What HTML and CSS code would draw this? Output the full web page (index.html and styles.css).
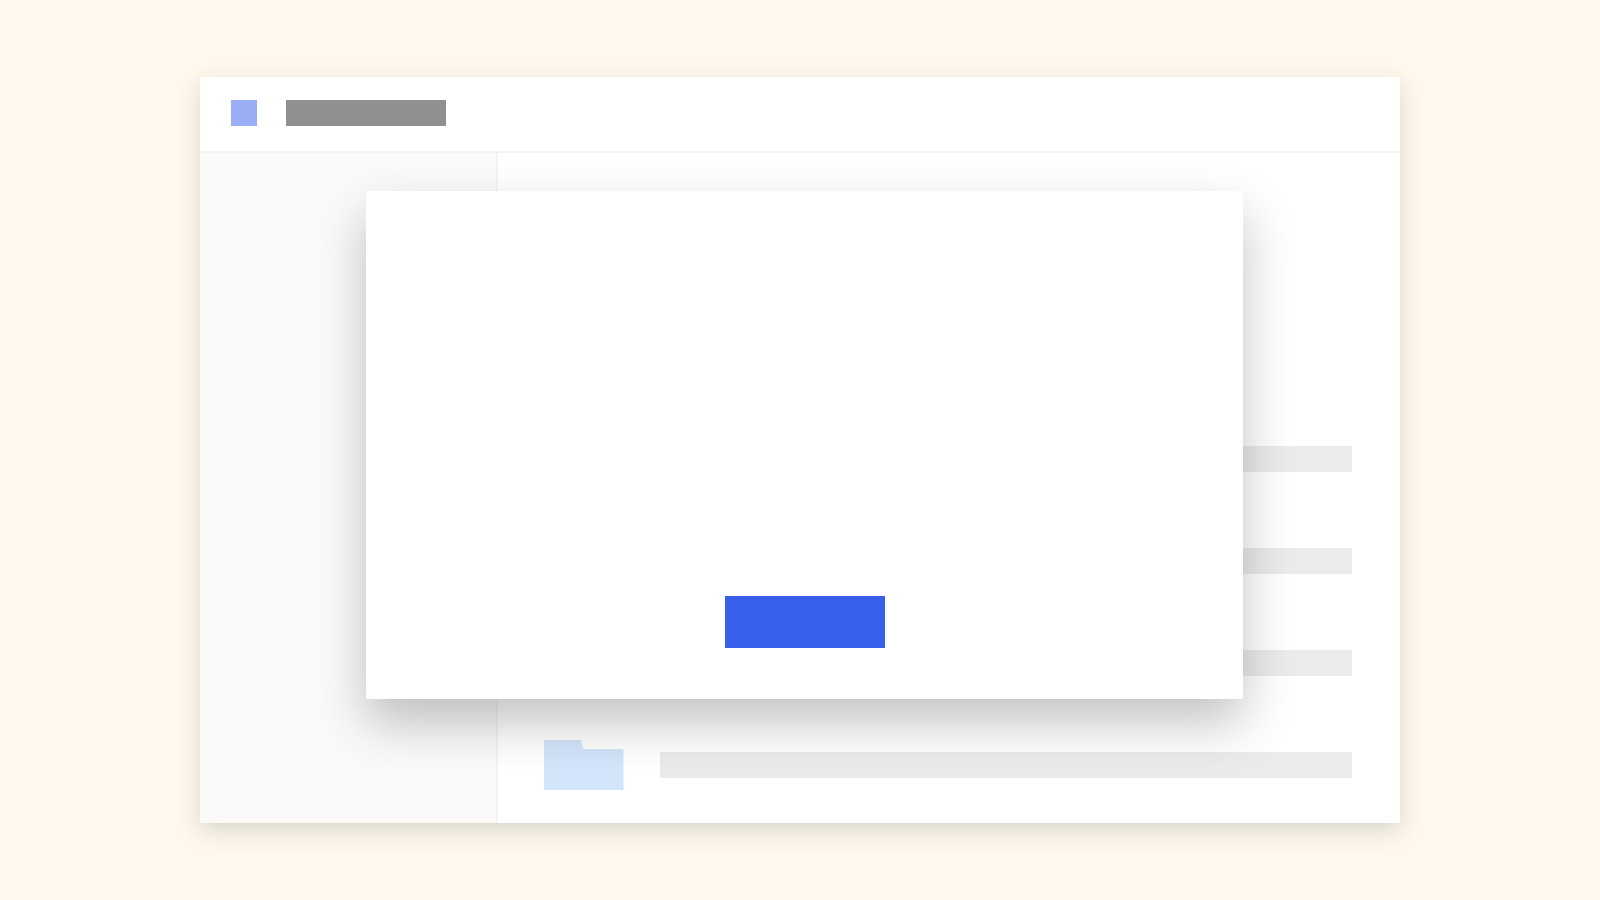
FILE: index.html
```html
<!DOCTYPE html>
<html lang="en">
<head>
<meta charset="utf-8">
<meta name="viewport" content="width=device-width, initial-scale=1">
<title>Dialog over file list</title>
<link rel="stylesheet" href="styles.css">
</head>
<body>
<div class="window">
  <header class="header">
    <span class="logo"></span>
    <span class="title"></span>
  </header>
  <div class="body">
    <aside class="sidebar"></aside>
    <main class="main">
      <ul class="files">
        <li class="file">
          <svg class="folder" viewBox="0 0 80 50" aria-hidden="true"><path d="M0 0H37C38 3 38 7 40 9H79.500V50H0Z"/></svg>
          <span class="line"></span>
        </li>
        <li class="file">
          <svg class="folder" viewBox="0 0 80 50" aria-hidden="true"><path d="M0 0H37C38 3 38 7 40 9H79.500V50H0Z"/></svg>
          <span class="line"></span>
        </li>
        <li class="file">
          <svg class="folder" viewBox="0 0 80 50" aria-hidden="true"><path d="M0 0H37C38 3 38 7 40 9H79.500V50H0Z"/></svg>
          <span class="line"></span>
        </li>
        <li class="file">
          <svg class="folder" viewBox="0 0 80 50" aria-hidden="true"><path d="M0 0H37C38 3 38 7 40 9H79.500V50H0Z"/></svg>
          <span class="line"></span>
        </li>
      </ul>
    </main>
  </div>
  <section class="dialog" role="dialog" aria-label="Dialog">
    <button class="action" type="button" aria-label="Confirm"></button>
  </section>
</div>
</body>
</html>
```
FILE: styles.css
```css
* {
  box-sizing: border-box;
}

body {
  margin: 0;
  min-height: 100vh;
  display: flex;
  justify-content: center;
  padding: 77px 0;
  background: #fff9ed;
  font-family: "Liberation Sans", Arial, sans-serif;
}

.window {
  position: relative;
  display: flex;
  flex-direction: column;
  width: 75%;
  background: #fff;
  box-shadow: 0 8px 22px rgba(10, 40, 10, 0.16);
}

.header {
  display: flex;
  align-items: center;
  gap: 29px;
  padding: 23px 31px 25px;
  border-bottom: 2px solid #f3f3f3;
}

.logo {
  width: 26px;
  height: 26px;
  background: #99aef5;
}

.title {
  width: 160px;
  height: 26px;
  background: #909090;
}

.body {
  flex: 1;
  display: flex;
}

.sidebar {
  width: 298px;
  background: #fbfaf8;
  border-right: 2px solid #f4f4f5;
}

.main {
  flex: 1;
  display: flex;
  flex-direction: column;
  justify-content: flex-end;
  padding: 33px 48px 33px 46px;
}

.files {
  display: flex;
  flex-direction: column;
  gap: 52px;
  margin: 0;
  padding: 0;
  list-style: none;
}

.file {
  display: flex;
  align-items: center;
  gap: 36px;
}

.folder {
  width: 80px;
  height: 50px;
  fill: #d3e5fb;
}

.line {
  flex: 1;
  height: 26px;
  background: #ebebeb;
}

/* Floats over the window, leaving its edges visible */
.dialog {
  position: absolute;
  inset: 114px 157px 124px 166px;
  display: flex;
  align-items: flex-end;
  justify-content: center;
  padding-bottom: 51px;
  background: #fff;
  box-shadow: 0 24px 48px rgba(0, 0, 0, 0.24);
}

.action {
  width: 160px;
  height: 52px;
  padding: 0;
  border: 0;
  background: #3860eb;
  cursor: pointer;
}
```
